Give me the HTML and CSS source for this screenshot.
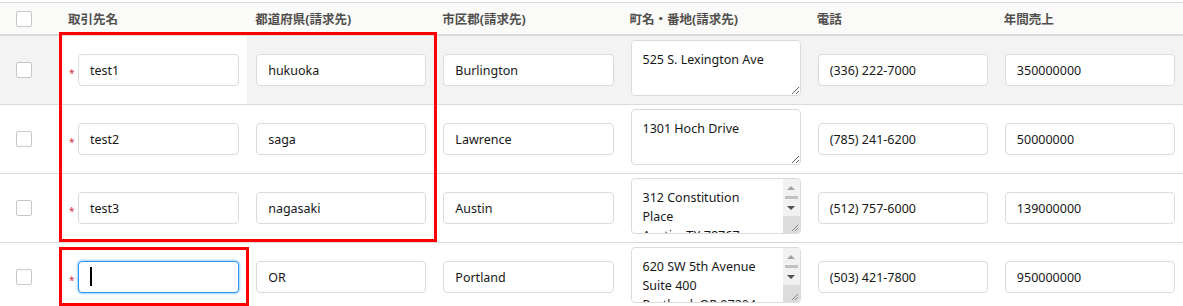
FILE: index.html
```html
<!DOCTYPE html>
<html lang="ja">
  <head>
    <meta charset="utf-8" />
    <meta name="viewport" content="width=device-width, initial-scale=1" />
    <title>取引先 一括編集</title>
    <link rel="stylesheet" href="styles.css">
  </head>
  <body>
    <div class="grid-wrap">
      <div class="grid-row grid-head">
        <div class="cell cell-check"><span class="checkbox"></span></div>
        <div class="cell head-cell">取引先名</div>
        <div class="cell head-cell">都道府県(請求先)</div>
        <div class="cell head-cell">市区郡(請求先)</div>
        <div class="cell head-cell">町名・番地(請求先)</div>
        <div class="cell head-cell">電話</div>
        <div class="cell head-cell">年間売上</div>
      </div>

      <div class="grid-row row-hover">
        <div class="cell cell-check"><span class="checkbox"></span></div>
        <div class="cell cell-active">
          <span class="req-mark">*</span>
          <input class="field" type="text" value="test1" />
        </div>
        <div class="cell"><input class="field" type="text" value="hukuoka" /></div>
        <div class="cell"><input class="field" type="text" value="Burlington" /></div>
        <div class="cell">
          <div class="area-box"><textarea class="area">525 S. Lexington Ave</textarea></div>
        </div>
        <div class="cell"><input class="field" type="text" value="(336) 222-7000" /></div>
        <div class="cell"><input class="field" type="text" value="350000000" /></div>
      </div>

      <div class="grid-row">
        <div class="cell cell-check"><span class="checkbox"></span></div>
        <div class="cell">
          <span class="req-mark">*</span>
          <input class="field" type="text" value="test2" />
        </div>
        <div class="cell"><input class="field" type="text" value="saga" /></div>
        <div class="cell"><input class="field" type="text" value="Lawrence" /></div>
        <div class="cell">
          <div class="area-box"><textarea class="area">1301 Hoch Drive</textarea></div>
        </div>
        <div class="cell"><input class="field" type="text" value="(785) 241-6200" /></div>
        <div class="cell"><input class="field" type="text" value="50000000" /></div>
      </div>

      <div class="grid-row">
        <div class="cell cell-check"><span class="checkbox"></span></div>
        <div class="cell">
          <span class="req-mark">*</span>
          <input class="field" type="text" value="test3" />
        </div>
        <div class="cell"><input class="field" type="text" value="nagasaki" /></div>
        <div class="cell"><input class="field" type="text" value="Austin" /></div>
        <div class="cell">
          <div class="area-box">
            <textarea class="area area-scroll">312 Constitution Place
Austin, TX 78767</textarea>
            <div class="fake-scroll">
              <span class="sb-btn"><span class="arrow-up"></span></span>
              <span class="sb-thumb"></span>
              <span class="sb-btn"><span class="arrow-down"></span></span>
              <span class="sb-corner">
                <svg width="17" height="17" viewBox="0 0 17 17">
                  <path d="M15 9 L9 15 M15 12 L12 15" stroke="#8a8a8a" stroke-width="1" />
                </svg>
              </span>
            </div>
          </div>
        </div>
        <div class="cell"><input class="field" type="text" value="(512) 757-6000" /></div>
        <div class="cell"><input class="field" type="text" value="139000000" /></div>
      </div>

      <div class="grid-row">
        <div class="cell cell-check"><span class="checkbox"></span></div>
        <div class="cell">
          <span class="req-mark">*</span>
          <div class="field-box">
            <input class="field field-focus" type="text" value="" />
            <span class="caret"></span>
          </div>
        </div>
        <div class="cell"><input class="field" type="text" value="OR" /></div>
        <div class="cell"><input class="field" type="text" value="Portland" /></div>
        <div class="cell">
          <div class="area-box">
            <textarea class="area area-scroll">620 SW 5th Avenue
Suite 400
Portland, OR 97204</textarea>
            <div class="fake-scroll">
              <span class="sb-btn"><span class="arrow-up"></span></span>
              <span class="sb-thumb"></span>
              <span class="sb-btn"><span class="arrow-down"></span></span>
              <span class="sb-corner">
                <svg width="17" height="17" viewBox="0 0 17 17">
                  <path d="M15 9 L9 15 M15 12 L12 15" stroke="#8a8a8a" stroke-width="1" />
                </svg>
              </span>
            </div>
          </div>
        </div>
        <div class="cell"><input class="field" type="text" value="(503) 421-7800" /></div>
        <div class="cell"><input class="field" type="text" value="950000000" /></div>
      </div>

      <!-- annotation frames -->
      <div class="mark mark-rows"></div>
      <div class="mark mark-new"></div>
    </div>
  </body>
</html>
```

FILE: styles.css
```css
* {
  box-sizing: border-box;
}

body {
  margin: 0;
  background: #fff;
  color: #181818;
  font-family: "Noto Sans", "Noto Sans CJK JP", sans-serif;
  font-size: 12.5px;
}

.grid-wrap {
  position: relative;
  padding-top: 2px;
  height: 306px;
  overflow: hidden;
}

.grid-row {
  display: grid;
  grid-template-columns: 60px repeat(6, 1fr);
  height: 69px;
  border-bottom: 1px solid #dddbda;
}

.grid-head {
  height: 34px;
  background: #fafaf9;
  border-top: 1px solid #dddbda;
  border-bottom: 2px solid #dddbda;
}

.row-hover {
  background: #f3f3f3;
}

.cell {
  display: flex;
  align-items: center;
  min-width: 0;
  padding: 0 8px 0 9px;
}

.cell-active {
  background: #fff;
}

.cell-check {
  padding-left: 16px;
}

.head-cell {
  padding-left: 8px;
  color: #514f4d;
  font-size: 12.5px;
  font-weight: 700;
}

.checkbox {
  display: block;
  width: 16px;
  height: 16px;
  background: #fff;
  border: 1px solid #c9c7c5;
  border-radius: 2px;
}

.req-mark {
  flex: none;
  width: 9px;
  margin-top: 6px;
  color: #d2314a;
  font-size: 10px;
  line-height: 1;
}

.field {
  display: block;
  width: 100%;
  height: 32px;
  padding: 0 11px;
  background: #fff;
  border: 1px solid #dddbda;
  border-radius: 4px;
  color: #181818;
  font: inherit;
  outline: none;
}

.field-box {
  position: relative;
  flex: 1;
  min-width: 0;
}

.field-focus {
  border-color: #2a94f4;
  box-shadow: 0 0 3px #3f9ef7;
}

.caret {
  position: absolute;
  left: 12px;
  top: 6px;
  width: 1.5px;
  height: 19px;
  background: #000;
}

.area-box {
  position: relative;
  width: 100%;
  margin-bottom: 4px;
}

.area {
  display: block;
  width: 100%;
  height: 56px;
  padding: 9px 11px;
  background: #fff;
  border: 1px solid #dddbda;
  border-radius: 4px;
  color: #181818;
  font: inherit;
  line-height: 19px;
  outline: none;
}

.area-scroll {
  overflow: hidden;
  resize: none;
  padding-right: 28px;
}

.fake-scroll {
  position: absolute;
  top: 1px;
  right: 1px;
  bottom: 1px;
  width: 17px;
  display: flex;
  flex-direction: column;
  background: #f1f1f1;
  border-radius: 0 3px 3px 0;
  overflow: hidden;
}

.sb-btn {
  display: flex;
  align-items: center;
  justify-content: center;
  height: 17px;
  flex: none;
}

.arrow-up {
  width: 0;
  height: 0;
  border-left: 4px solid transparent;
  border-right: 4px solid transparent;
  border-bottom: 4px solid #a3a3a3;
}

.arrow-down {
  width: 0;
  height: 0;
  border-left: 4px solid transparent;
  border-right: 4px solid transparent;
  border-top: 4px solid #505050;
}

.sb-thumb {
  flex: 1;
  margin: 0 2px;
  background: #c1c1c1;
}

.sb-corner {
  display: block;
  height: 17px;
  flex: none;
  background: #dcdcdc;
}

.sb-corner svg {
  display: block;
}

.mark {
  position: absolute;
  border: 3px solid #f00;
  pointer-events: none;
}

.mark-rows {
  left: 59px;
  top: 32px;
  width: 378px;
  height: 210px;
}

.mark-new {
  left: 59px;
  top: 247px;
  width: 190px;
  height: 59px;
}
```
